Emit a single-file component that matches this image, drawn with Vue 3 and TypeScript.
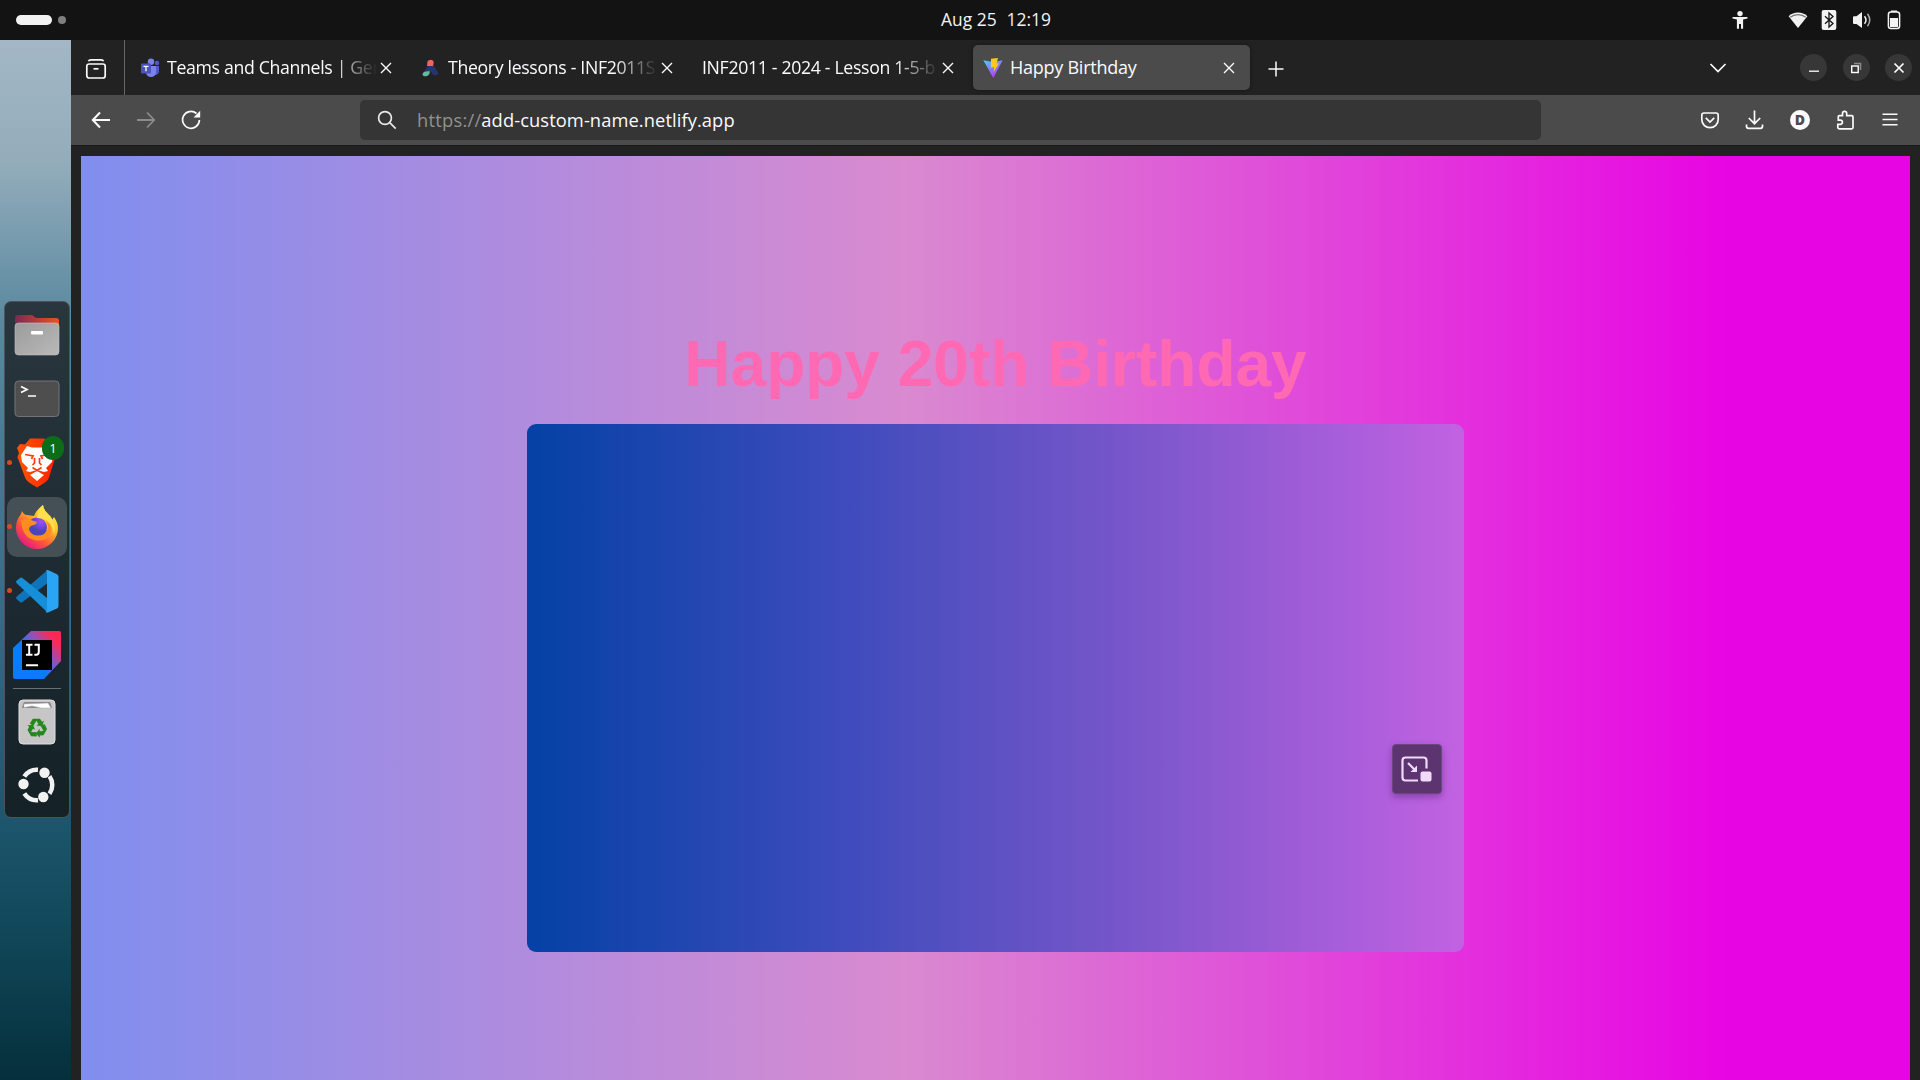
<script setup lang="ts">
interface Tab {
  title: string
  icon: 'teams' | 'amathuba' | 'vite' | 'none'
  width: number
  textWidth: number
  active?: boolean
}

const tabs: Tab[] = [
  { title: 'Teams and Channels | Gen', icon: 'teams', width: 281, textWidth: 210 },
  { title: 'Theory lessons - INF2011S', icon: 'amathuba', width: 281, textWidth: 210 },
  { title: 'INF2011 - 2024 - Lesson 1-5-b', icon: 'none', width: 281, textWidth: 237 },
  { title: 'Happy Birthday', icon: 'vite', width: 277, textWidth: 211, active: true },
]
</script>

<template>
  <div class="desktop">
    <header class="topbar">
      <div class="workspaces"><i class="pill"></i><i class="dot"></i></div>
      <div class="clock"><span>Aug 25</span><span>12:19</span></div>
      <div class="status">
        <svg class="s-acc" width="16" height="20" viewBox="0 0 16 20" fill="#f2f2f2">
          <circle cx="8" cy="3.6" r="2.7" />
          <path d="M.5 7h15v1.6l-4.4 1v9.2H9V14H7v4.8H4.9V9.6L.5 8.600z" />
        </svg>
        <svg class="s-wifi" width="20" height="18" viewBox="0 0 20 18">
          <path d="M.6 5.200C5.500.2 14.500.2 19.400 5.200L10 17z" fill="#f2f2f2" />
          <path d="M2.200 6.300C6.500 2.600 13.500 2.600 17.800 6.300" fill="none" stroke="#777" stroke-width="1.300" />
        </svg>
        <svg class="s-bt" width="16" height="20" viewBox="0 0 16 20">
          <rect x=".7" width="14.600" height="20" rx="2" fill="#f2f2f2" />
          <path d="M4 6.200l8 7.400-4 3.400V3l4 3.400-8 7.400" fill="none" stroke="#131313" stroke-width="1.300" />
        </svg>
        <svg class="s-vol" width="20" height="18" viewBox="0 0 20 18">
          <path d="M1 6.200q0-1 1-1h2.500L10 1v16l-5.500-4H2q-1 0-1-1z" fill="#f2f2f2" />
          <path d="M12.500 5.200q3 3.800 0 7.600" fill="none" stroke="#f2f2f2" stroke-width="1.500" />
          <path d="M15.500 2.700q4.500 6.300 0 12.600" fill="none" stroke="#aaa" stroke-width="1.500" />
        </svg>
        <svg class="s-bat" width="14" height="20" viewBox="0 0 14 20">
          <path d="M4 2V.5h6V2" fill="#f2f2f2" />
          <rect x="1.400" y="2" width="11.200" height="16.500" rx="2.500" fill="none" stroke="#f2f2f2" stroke-width="1.500" />
          <rect x="3" y="8" width="8" height="9" fill="#f2f2f2" />
        </svg>
      </div>
    </header>

    <div class="workspace">
      <aside class="side">
        <nav class="dock">
          <div class="app">
            <svg width="48" height="48" viewBox="0 0 48 48">
              <defs>
                <linearGradient id="fo"><stop stop-color="#7d2855" /><stop offset="1" stop-color="#e95420" /></linearGradient>
                <linearGradient id="fg" x2="1" y2="1"><stop stop-color="#9b9b9b" /><stop offset="1" stop-color="#b9b9b9" /></linearGradient>
              </defs>
              <path d="M2 18V7q0-3 3-3h13q2 0 3 1.500T24 7h19q3 0 3 3v8H2z" fill="url(#fo)" />
              <rect x="2" y="12" width="44" height="32" rx="3.500" fill="url(#fg)" stroke="#c5c5c5" stroke-width=".6" />
              <rect x="18" y="20" width="12" height="3.400" rx="1" fill="#fff" />
            </svg>
          </div>
          <div class="app">
            <svg width="48" height="48" viewBox="0 0 48 48">
              <rect x="2" y="6" width="44" height="35.500" rx="3.500" fill="#4e4e4e" stroke="#747474" />
              <path d="M8 11.500l6 3-6 3M15 21h8" fill="none" stroke="#fff" stroke-width="1.700" />
            </svg>
          </div>
          <div class="app running">
            <svg width="48" height="52" viewBox="0 0 48 52">
              <defs><linearGradient id="br"><stop stop-color="#ff5500" /><stop offset="1" stop-color="#ff2000" /></linearGradient></defs>
              <path d="M17 1.500h14l5 4 6 3-1 8 1.500 3L36 40.500q-1 3-4 5l-8 5-8-5q-3-2-4-5L4.500 20 6 16l-2-5 3-4 5 .500z" fill="url(#br)" />
              <path d="M14 9l5 1.500h10L34 9l6 9-1 7-6 6 2 3-4 1-7-2-7 2-4-1 2-3-6-6-1-7zM24 34l7 4-7 6-7-6z" fill="#fff" />
              <path d="M12 17.500l8 1.500-1.500 3M36 17.500l-8 1.500 1.500 3M21.500 21v5l-2 2M26.500 21v5l2 2M19.500 30.500l4.500 3 4.500-3" fill="none" stroke="#fb3c08" stroke-width="1.700" />
            </svg>
            <b class="badge">1</b>
          </div>
          <div class="app running focused">
            <svg width="48" height="48" viewBox="0 0 48 48">
              <defs>
                <linearGradient id="ff" x1=".85" y1=".1" x2=".2" y2=".95"><stop stop-color="#fff44f" /><stop offset=".35" stop-color="#ffb52b" /><stop offset=".65" stop-color="#ff5a36" /><stop offset="1" stop-color="#e31587" /></linearGradient>
                <radialGradient id="fp" cx=".7" cy=".2"><stop stop-color="#a04fff" /><stop offset="1" stop-color="#4b45bc" /></radialGradient>
              </defs>
              <path d="M30 2q1 6 5 9 3 2 4 6l2-3q4 6 4 11a21 21 0 0 1-42 0q0-8 5-14l1-3q2 4 5 4l7 1q2-6 9-11z" fill="url(#ff)" />
              <circle cx="24" cy="24.500" r="10" fill="url(#fp)" />
              <path d="M8 17q6-3 10 0l6 2q-1 3-5 3.500-3 1-3 4 2 6 9 6t10-6q1-5-3-9 8 4 6 12-4 9-14 8Q9 36 8 17z" fill="#ff8c20" />
              <path d="M30 2q1 6 5 9 9 8 6 20-1-8-6-13-5-3-11-3 1-8 6-13z" fill="#ffe04a" />
            </svg>
          </div>
          <div class="app running">
            <svg width="48" height="48" viewBox="0 0 48 48">
              <path d="M34 3.500v13L9.500 35q-1.500 1-2.500 0l-3.500-3q-1-1 0-2.200z" fill="#0f74ba" />
              <path d="M3.500 16q-1-1 0-2.200l3.500-2.800q1-1 2.500 0L34 31v14z" fill="#168ed8" />
              <path d="M33 3.500q1-1 3 0l8 3.700q1.500 1 1.500 2.500v29q0 2-1.500 2.700l-8 3.700q-2 1-3.500 0 1.500-1 1.500-3V6q0-2-1-2.500z" fill="#2aa5f4" />
            </svg>
          </div>
          <div class="app">
            <svg width="48" height="48" viewBox="0 0 48 48">
              <defs>
                <linearGradient id="ij" x1=".9" y1=".1" x2=".2" y2=".7"><stop offset=".08" stop-color="#fe2857" /><stop offset=".42" stop-color="#8b55bd" /><stop offset=".75" stop-color="#087cfa" /></linearGradient>
              </defs>
              <path d="M18 0h28q2 0 2 2v28L31 48H2q-2 0-2-2V17z" fill="url(#ij)" />
              <path d="M9 9h30v30H9z" fill="#000" />
              <path d="M13 13.800h6.500M16.200 13.800v10M13 23.800h6.500M21.500 13.800h4.300v7q0 3-2.500 3h-2M13 34.200h12" fill="none" stroke="#fff" stroke-width="2" />
            </svg>
          </div>
          <hr class="rule" />
          <div class="app trash">
            <svg width="48" height="48" viewBox="0 0 48 48">
              <rect x="6" y="2" width="36" height="44" rx="4" fill="#c6c6c6" stroke="#e0e0e0" />
              <path d="M9 10l1.500-5q.5-1 2-1h23q1.500 0 2 1l1.500 5z" fill="#888" />
              <path d="M11 9.500V6l24-1 3 5H28l-9-2z" fill="#fff" stroke="#aaa" stroke-width=".5" />
              <g transform="translate(24 30)" fill="#23891d">
                <path
                  v-for="angle in [0, 120, 240]"
                  :key="angle"
                  :transform="`rotate(${angle})`"
                  d="M-7.200-4.500L-4.200-9.200H3L5-6.200 7-7.200 5.200-1.800-.6-2.600 1.400-3.900-.6-7.200-3.600-2.200z"
                />
              </g>
            </svg>
          </div>
          <div class="app">
            <svg width="48" height="48" viewBox="0 0 48 48" fill="none" stroke="#f2f2f2" stroke-width="4.500">
              <path d="M11.300 15.500A15.200 15.200 0 0 1 25 8.800" />
              <path d="M36.500 15.300A15.200 15.200 0 0 1 36.500 32.800" />
              <path d="M11.300 32.500A15.200 15.200 0 0 0 25 39.200" />
              <g fill="#f2f2f2" stroke="none"><circle cx="31.500" cy="11.800" r="5.200" /><circle cx="10.500" cy="23" r="5.200" /><circle cx="30.300" cy="36" r="5.200" /></g>
            </svg>
          </div>
        </nav>
      </aside>

      <main class="browser">
        <div class="tabstrip">
          <div class="recent">
            <svg width="22" height="22" viewBox="0 0 22 22" fill="none" stroke="#fbfbfe" stroke-width="1.700">
              <path d="M3.500 3.200Q4 1.800 6 1.800h10q2 0 2.500 1.400" />
              <rect x="1.800" y="6" width="18.400" height="14" rx="2.300" />
              <path d="M8.500 10.800h5" />
            </svg>
          </div>
          <div
            v-for="tab in tabs"
            :key="tab.title"
            class="tab"
            :class="{ active: tab.active }"
            :style="{ width: tab.width + 'px' }"
          >
            <svg v-if="tab.icon === 'teams'" class="fav" width="20" height="20" viewBox="0 0 20 20">
              <circle cx="17" cy="5" r="2.200" fill="#5059c9" /><path d="M14 8h5v6q-1 3-4 3z" fill="#5059c9" />
              <circle cx="11" cy="3.700" r="3.200" fill="#7b83eb" /><path d="M6 8h10v7q-1 4-5 4t-5-4z" fill="#7b83eb" />
              <rect x="1" y="5.500" width="10" height="10" rx="1" fill="#4b53bc" />
              <path d="M3.500 8.300h5M6 8.300v5" stroke="#fff" stroke-width="1.300" />
            </svg>
            <svg v-else-if="tab.icon === 'amathuba'" class="fav" width="20" height="20" viewBox="0 0 20 20">
              <path d="M9 6.500h1.800L16.500 15.500 13 16.500 9 11 5 16 4 14z" fill="#26356f" stroke="#26356f" stroke-width="2" stroke-linejoin="round" />
              <path d="M6.300 5.500a3.200 3.200 0 0 1 6.400-.8L12 8H6z" fill="#f26360" />
              <path d="M8.500 12.500q1 4.500-3.300 5.800-3.700.4-3.700-2.500 1-2.300 3.500-2.300t3.500-1z" fill="#66b999" />
            </svg>
            <svg v-else-if="tab.icon === 'vite'" class="fav" width="20" height="20" viewBox="0 0 20 20">
              <defs><linearGradient id="vi" x1="0" y1="0" x2=".6" y2="1"><stop stop-color="#41d1ff" /><stop offset="1" stop-color="#bd34fe" /></linearGradient></defs>
              <path d="M.3 2.300L10 4l9.700-1.700L10.300 20z" fill="url(#vi)" />
              <path d="M8 .8L15 0l-1.500 5.500 2.500-.3L10.700 14l.5-5-3.400.7z" fill="#ffc81f" />
            </svg>
            <span class="title" :style="{ width: tab.textWidth + 'px' }" :class="{ fade: !tab.active }">{{ tab.title }}</span>
            <svg class="close" width="12" height="12" viewBox="0 0 12 12" stroke="#fbfbfe" stroke-width="1.400"><path d="M1 1l10 10M11 1L1 11" /></svg>
          </div>
          <svg class="plus" width="16" height="16" viewBox="0 0 16 16" stroke="#fbfbfe" stroke-width="1.500"><path d="M8 .5v15M.5 8h15" /></svg>
          <svg class="chev" width="18" height="12" viewBox="0 0 18 12" fill="none" stroke="#fbfbfe" stroke-width="1.700"><path d="M1.500 2L9 9.500 16.500 2" /></svg>
          <div class="winctl">
            <i><svg width="14" height="14" viewBox="0 0 14 14" stroke="#fff" stroke-width="1.300"><path d="M2 10.200h10" /></svg></i>
            <i><svg width="14" height="14" viewBox="0 0 14 14" fill="none"><path d="M5 2.500h6.500V9" stroke="#8a8a8a" stroke-width="1.500" /><rect x="2.700" y="5" width="6.500" height="6.500" stroke="#fff" stroke-width="1.400" /></svg></i>
            <i><svg width="14" height="14" viewBox="0 0 14 14" stroke="#fff" stroke-width="1.700"><path d="M2.500 2.500l9 9M11.500 2.500l-9 9" /></svg></i>
          </div>
        </div>

        <div class="navbar">
          <div class="nav">
            <svg width="20" height="18" viewBox="0 0 20 18" fill="none" stroke="#fbfbfe" stroke-width="2"><path d="M19 9H2M9 1.500L1.800 9 9 16.500" /></svg>
            <svg width="20" height="18" viewBox="0 0 20 18" fill="none" stroke="#8c8c8e" stroke-width="1.800"><path d="M1 9h17M11 1.500L18.200 9 11 16.500" /></svg>
            <svg width="20" height="20" viewBox="0 0 20 20" fill="none" stroke="#fbfbfe" stroke-width="1.700"><path d="M15.500 3.500A8.400 8.400 0 1 0 18.400 10" /><path d="M19.200.8v6.700h-6.700z" fill="#fbfbfe" stroke="none" /></svg>
          </div>
          <div class="urlbar">
            <svg width="20" height="20" viewBox="0 0 20 20" fill="none" stroke="#e8e8ea" stroke-width="1.700"><circle cx="8" cy="8" r="6.400" /><path d="M12.700 12.700l6 6" /></svg>
            <span class="url"><span class="scheme">https://</span><span class="host">add-custom-name.netlify.app</span></span>
          </div>
          <div class="tools">
            <svg width="20" height="20" viewBox="0 0 20 20" fill="none" stroke="#fbfbfe" stroke-width="1.700"><path d="M4 3h12q2.200 0 2.200 2.200V9.500a8.200 8.200 0 0 1-16.400 0V5.200Q1.800 3 4 3zM5.800 7.800L10 12l4.200-4.200" /></svg>
            <svg width="20" height="20" viewBox="0 0 20 20" fill="none" stroke="#fbfbfe" stroke-width="1.700"><path d="M9.500 .5V13.500M3.800 8L9.500 13.700 15.200 8M1.500 14.500v1.800q0 2 2 2h12q2 0 2-2v-1.800" /></svg>
            <span class="avatar">D</span>
            <svg width="20" height="20" viewBox="0 0 20 20" fill="none" stroke="#fbfbfe" stroke-width="1.700"><path d="M3.300 6.600q0-1 1-1H7.500V3.500a2.100 2.100 0 0 1 4.200 0v2.100h5q1.300 0 1.300 1.300v10.700q0 1.300-1.300 1.300H4.300q-1.500 0-1.500-1.300v-3.300h2.500a2 2 0 0 0 0-4.200H3.300z" /></svg>
            <svg width="20" height="20" viewBox="0 0 20 20" stroke="#fbfbfe" stroke-width="1.500"><path d="M2.500 4.300h15M2.500 9.500h15M2.500 14.700h15" /></svg>
          </div>
        </div>

        <section class="page">
          <h1>Happy 20th Birthday</h1>
          <div class="video">
            <button class="pip">
              <svg width="32" height="28" viewBox="0 0 32 28" fill="none" stroke="#f0dcf8">
                <path d="M26.500 12.500V4.500q0-3-3-3h-18q-3 0-3 3v17q0 3 3 3h12.500" stroke-width="2.200" />
                <path d="M8 7l8 8" stroke-width="2.200" />
                <path d="M17 9.500V16h-6.500z" fill="#f0dcf8" stroke="none" />
                <rect x="20.500" y="15.500" width="11" height="10" rx="2" fill="#f0dcf8" stroke="none" />
              </svg>
            </button>
          </div>
        </section>
      </main>
    </div>
  </div>
</template>

<style>
body {
  background: #222;
  overflow: hidden;
}
</style>

<style scoped>
* {
  box-sizing: border-box;
}
.desktop {
  width: 1920px;
  height: 1080px;
  display: flex;
  flex-direction: column;
  overflow: hidden;
  font-family: 'Open Sans', 'Noto Sans', sans-serif;
  color: #fbfbfe;
}
svg {
  display: block;
  flex: none;
}
.topbar {
  height: 40px;
  flex: none;
  background: #131313;
  display: grid;
  grid-template-columns: 1fr auto 1fr;
  align-items: center;
}
.workspaces {
  display: flex;
  align-items: center;
  gap: 6px;
  padding-left: 16px;
}
.pill {
  width: 36px;
  height: 10px;
  border-radius: 5px;
  background: #f2f2f2;
}
.dot {
  width: 8px;
  height: 8px;
  border-radius: 50%;
  background: #808080;
}
.clock {
  display: flex;
  gap: 10px;
  font-size: 17.4px;
  line-height: 38px;
  margin-left: 72px;
  padding-bottom: 2px;
  color: #f2f2f2;
}
.status {
  display: flex;
  justify-content: flex-end;
  align-items: center;
  padding-right: 19px;
}
.s-wifi {
  margin-left: 40px;
}
.s-bt {
  margin-left: 13px;
}
.s-vol {
  margin-left: 15px;
}
.s-bat {
  margin-left: 15px;
}
.workspace {
  flex: 1;
  display: flex;
  min-height: 0;
}
.side {
  width: 71px;
  flex: none;
  padding: 261px 0 0 4px;
  background: linear-gradient(to bottom, #a3b7c5 0, #94adbb 120px, #7399ac 210px, #5b889f 280px, #4b7b93 400px, #316985 600px, #1c546b 790px, #104658 900px, #052f3b 1040px);
}
.dock {
  width: 66px;
  height: 517px;
  border: 1px solid #4b5459;
  border-radius: 7px;
  background: linear-gradient(#2a363e, #1c2930 60%, #142127);
  display: flex;
  flex-direction: column;
  align-items: center;
  padding-top: 3px;
}
.app {
  width: 60px;
  height: 60px;
  margin-bottom: 4px;
  flex: none;
  display: flex;
  align-items: center;
  justify-content: center;
  position: relative;
  border-radius: 10px;
}
.focused {
  background: #454f56;
}
.running::before {
  content: '';
  position: absolute;
  left: 0;
  top: 27px;
  width: 5px;
  height: 5px;
  border-radius: 50%;
  background: #d94c1a;
}
.badge {
  position: absolute;
  left: 35px;
  top: 3px;
  width: 22px;
  height: 24px;
  border-radius: 11px;
  background: #0d6c18;
  text-align: center;
  font-size: 13px;
  font-weight: 400;
  line-height: 24px;
}
.trash {
  margin-bottom: 3px;
}
.rule {
  width: 48px;
  height: 1px;
  border: 0;
  margin: -1px 0 3px;
  flex: none;
  background: #667176;
}
.browser {
  flex: 1;
  display: flex;
  flex-direction: column;
  background: #222;
}
.tabstrip {
  height: 55px;
  flex: none;
  display: flex;
  align-items: center;
}
.recent {
  width: 54px;
  height: 55px;
  border-right: 1px solid #666;
  display: flex;
  align-items: center;
  padding: 2px 0 0 14px;
}
.tab {
  height: 45px;
  flex: none;
  display: flex;
  align-items: center;
  padding-left: 15px;
  position: relative;
}
.tab.active {
  margin-left: 5px;
  padding-left: 10px;
  background: #4b4b4b;
  border-radius: 5px;
  box-shadow: 0 0 4px rgba(0, 0, 0, 0.4);
}
.fav {
  margin-right: 7px;
}
.title {
  overflow: hidden;
  white-space: nowrap;
  font-size: 18px;
  line-height: 45px;
  font-weight: 370;
  letter-spacing: -0.25px;
}
.title.fade {
  font-size: 17.7px;
  letter-spacing: -0.33px;
  mask-image: linear-gradient(to left, transparent, #000 44px);
}
.close {
  margin-left: 3px;
}
.active .close {
  margin-left: 2px;
}
.plus {
  margin: 2px 0 0 18px;
}
.chev {
  margin-left: 425px;
}
.winctl {
  display: flex;
  gap: 15.500px;
  margin: 0 8px 0 auto;
}
.winctl i {
  width: 27px;
  height: 27px;
  border-radius: 50%;
  background: #373737;
  display: flex;
  align-items: center;
  justify-content: center;
}
.navbar {
  height: 51px;
  flex: none;
  background: #4b4b4b;
  border-bottom: 1px solid #191919;
  display: flex;
  align-items: center;
}
.nav {
  display: flex;
  gap: 25px;
  padding-left: 20px;
  width: 289px;
  align-items: center;
}
.urlbar {
  width: 1181px;
  height: 40px;
  border-radius: 5px;
  background: #353535;
  display: flex;
  align-items: center;
  padding-left: 17px;
  gap: 20px;
}
.url {
  font-size: 18.3px;
  font-weight: 380;
  padding-bottom: 2px;
  white-space: nowrap;
}
.scheme {
  color: #919192;
  letter-spacing: 0.25px;
}
.host {
  letter-spacing: 0.1px;
}
.tools {
  display: flex;
  gap: 25px;
  margin: 0 20px 0 auto;
  align-items: center;
}
.avatar {
  width: 20px;
  height: 20px;
  border-radius: 50%;
  background: #fbfbfe;
  color: #4b4b4b;
  font-size: 14px;
  font-weight: 800;
  line-height: 20px;
  text-align: center;
}
.page {
  flex: 1;
  margin: 10px 10px 0;
  background: linear-gradient(to right, #808eee, #d98ad0 45%, #e805e3 90%);
  display: flex;
  flex-direction: column;
  align-items: center;
}
h1 {
  margin: 171px 0 0;
  font: bold 64px/74px 'Liberation Sans', Arial, sans-serif;
  color: #ff69b4;
  white-space: nowrap;
}
.video {
  width: 937px;
  height: 528px;
  margin-top: 23px;
  border-radius: 9px;
  background: linear-gradient(to right, #0441a5, #3b4bbb 32%, #7055c8 60%, #c262e2);
  position: relative;
}
.pip {
  position: absolute;
  left: 865px;
  top: 320px;
  width: 50px;
  height: 50px;
  border: 1px solid #6c4580;
  border-radius: 4px;
  background: #5c3470;
  padding: 2px 2px 0 0;
  display: flex;
  align-items: center;
  justify-content: center;
  box-shadow: 0 3px 7px rgba(60, 20, 90, 0.4);
}
</style>
